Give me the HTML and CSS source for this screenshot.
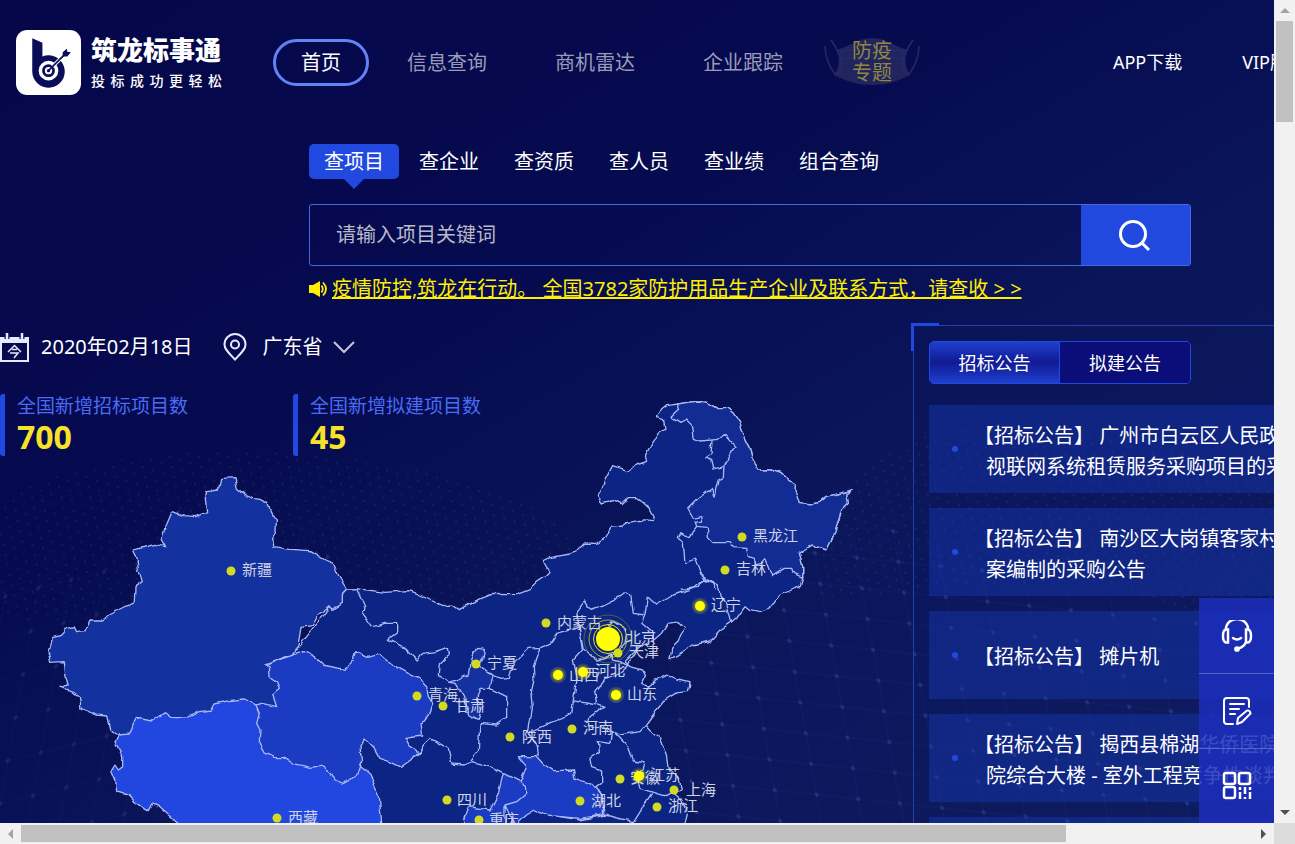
FILE: index.html
```html
<!DOCTYPE html>
<html lang="zh-CN">
<head>
<meta charset="utf-8">
<title>筑龙标事通</title>
<link rel="stylesheet" href="styles.css">
</head>
<body>
<div class="frame">
<div class="viewport">
<div class="page">
  <svg class="mesh" aria-hidden="true">
    <defs>
      <pattern id="net" width="34" height="40" patternUnits="userSpaceOnUse" patternTransform="rotate(-14) skewX(-24)">
        <path d="M0 20H34M17 0V40" stroke="#8aa0ff" stroke-opacity=".15" fill="none"/>
        <circle cx="17" cy="20" r="2" fill="#8aa0ff" fill-opacity=".6"/>
      </pattern>
      <pattern id="net2" width="42" height="30" patternUnits="userSpaceOnUse" patternTransform="rotate(6) skewX(16)">
        <path d="M0 15H42M21 0V30" stroke="#8aa0ff" stroke-opacity=".15" fill="none"/>
        <circle cx="21" cy="15" r="2" fill="#8aa0ff" fill-opacity=".6"/>
      </pattern>
      <pattern id="dust" width="11" height="9" patternUnits="userSpaceOnUse" patternTransform="rotate(18) skewX(30)">
        <circle cx="5" cy="4" r="1" fill="#8aa0ff" fill-opacity=".5"/>
      </pattern>
    </defs>
    <path d="M0 590C80 560 150 520 240 470L340 560 400 823H0Z" fill="url(#net)" opacity=".22"/>
    <path d="M0 500C120 440 260 440 420 470S560 560 620 560L600 620H0Z" fill="url(#dust)" opacity=".25"/>
    <path d="M640 823V600C760 560 860 500 920 540S1150 600 1274 640V823Z" fill="url(#net2)" opacity=".3"/>
    <path d="M820 520C900 410 1000 390 1274 480V640C1100 560 950 590 820 600Z" fill="url(#dust)" opacity=".25"/>
  </svg>

  <header class="header">
    <a class="logo" href="#">
      <svg class="logo-mark" viewBox="0 0 64 64" aria-hidden="true">
        <rect width="64" height="64" rx="11" fill="#fff"/>
        <path d="M16 8L26 12.500V26A16 16 0 1 1 16 41Z" fill="#0a0d57"/>
        <circle cx="32" cy="40" r="8" fill="none" stroke="#fff" stroke-width="3.400"/>
        <circle cx="32" cy="40" r="2.600" fill="none" stroke="#fff" stroke-width="2"/>
        <path d="M36 36L44 28" stroke="#fff" stroke-width="3.600"/>
        <path d="M32 40L50 22" stroke="#0a0d57" stroke-width="1.600"/>
        <path d="M46 22L50 18.500 50.500 21.500 54 22 50.500 26H46Z" fill="#0a0d57"/>
      </svg>
      <span class="logo-text"><b>筑龙标事通</b><small>投标成功更轻松</small></span>
    </a>
    <nav class="nav">
      <a class="nav-link current" href="#">首页</a>
      <a class="nav-link" href="#">信息查询</a>
      <a class="nav-link" href="#">商机雷达</a>
      <a class="nav-link" href="#">企业跟踪</a>
      <a class="mask" href="#">
        <svg class="mask-shape" viewBox="0 0 96 50" aria-hidden="true">
          <path d="M12 13C26 10 32 1 48 1S70 10 84 13C80 22 81 30 86 38C72 45 62 48 48 48S24 45 10 38C16 30 16 20 12 13Z" fill="#20245f"/>
          <path d="M16 14C30 13 66 13 80 14M17 22C30 19 66 19 79 22" fill="none" stroke="#2a2e68"/>
          <path d="M7 3C12 10 18 20 17 28S14 37 11 37C5 29 1 18 1 9M89 3C84 10 78 20 79 28S82 37 85 37C91 29 95 18 95 9" fill="none" stroke="#262a64" stroke-width="1.500"/>
        </svg>
        <span class="mask-text">防疫<br>专题</span>
      </a>
    </nav>
    <nav class="tools-nav">
      <a href="#">APP下载</a>
      <a href="#">VIP服务</a>
    </nav>
  </header>

  <section class="search">
    <div class="tabs">
      <button class="tab on" type="button">查项目</button>
      <button class="tab" type="button">查企业</button>
      <button class="tab" type="button">查资质</button>
      <button class="tab" type="button">查人员</button>
      <button class="tab" type="button">查业绩</button>
      <button class="tab" type="button">组合查询</button>
    </div>
    <form class="box">
      <input class="box-input" type="text" placeholder="请输入项目关键词" aria-label="请输入项目关键词">
      <button class="box-go" type="button" aria-label="搜索">
        <svg width="34" height="34" viewBox="0 0 34 34" fill="none" stroke="#fff" stroke-width="3" aria-hidden="true"><circle cx="14" cy="16" r="12.500"/><path d="M23 25L30 32"/></svg>
      </button>
    </form>
    <a class="notice" href="#"><svg width="19" height="18" viewBox="0 0 19 18" aria-hidden="true"><path d="M0 5H4L11 1V17L4 13H0Z" fill="#ffef00"/><path d="M12.500 5.500Q15 9 12.500 12.500M14 2.500Q20 9 14 15.500" fill="none" stroke="#ffef00" stroke-width="1.800"/></svg><span>疫情防控,筑龙在行动。 全国3782家防护用品生产企业及联系方式，请查收 &gt; &gt;</span></a>
  </section>

  <main class="board">
    <section class="overview">
      <svg class="map" viewBox="0 390 920 433" aria-label="全国项目分布">
        <defs>
          <filter id="rough" x="0" y="0" width="1" height="1" color-interpolation-filters="sRGB">
            <feTurbulence type="fractalNoise" baseFrequency=".12" numOctaves="1" seed="4"/>
            <feDisplacementMap in="SourceGraphic" scale="6" xChannelSelector="R" yChannelSelector="G"/>
          </filter>
          <radialGradient id="glow"><stop offset=".4" stop-color="#ffff00" stop-opacity=".5"/><stop offset="1" stop-color="#ffff00" stop-opacity="0"/></radialGradient>
        </defs>
        <g filter="url(#rough)">
        <g class="land" transform="translate(0 390) scale(.33333)">
          <path class="deep" d="M1040 597L1070 596 1155 607 1225 602 1252 612 1290 630 1330 647 1358 645 1378 659 1410 640 1445 625 1475 613 1550 614 1590 598 1610 578 1640 558 1651 547 1630 513 1650 503 1710 492 1730 485 1754 459 1792 460 1818 444 1835 412 1865 408 1880 398 1915 391 1960 395 1963 382 1950 357 1930 338 1910 323 1882 323 1863 341 1840 329 1807 339 1792 320 1802 305 1815 270 1838 227 1880 242 1910 225 1940 214 1936 197 1955 160 1975 130 1995 115 1990 85 1968 80 1980 62 2000 47 2030 42 2065 37 2095 33 2120 36 2150 53 2180 53 2200 70 2220 100 2235 145 2255 185 2262 220 2273 240 2315 240 2345 250 2370 272 2386 282 2385 305 2398 338 2435 342 2460 337 2480 320 2510 312 2560 300 2540 312 2545 340 2525 360 2513 400 2500 440 2480 480 2435 464 2398 487 2408 530 2408 562 2400 590 2375 600 2340 615 2325 640 2300 660 2280 668 2250 662 2235 650 2215 678 2190 700 2160 720 2130 753 2080 765 2040 790 2010 808 2015 775 2035 755 2042 735 2055 715 2035 695 2005 700 1985 730 1955 755 1930 765 1900 790 1875 815 1890 830 1925 840 1935 860 1925 880 1945 890 1970 870 2000 855 2030 870 2070 878 2065 905 2030 908 1995 930 1970 960 1938 1005 1960 1030 1980 1045 2000 1100 2005 1135 2035 1160 2045 1200 2020 1208 2045 1230 2060 1265 2045 1330 1000 1330 880 790 1000 640Z"/>
          <g transform="translate(0 210)">
            <path class="bright" d="M355 825L345 845 368 890 368 920 355 930 345 915 335 930 347 960 350 995 385 1005 405 1025 445 1052 455 1032 480 1040 535 1088 570 1120 1145 1120 1145 1090 1138 1010 1125 980 1110 940 1085 920 1000 700 700 700 390 780Z"/>
            <path class="vivid" d="M770 740L778 760 770 790 780 810 778 850 795 880 820 892 850 893 880 910 930 922 970 918 990 932 1005 960 1030 970 1050 960 1075 940 1085 910 1080 860 1095 837 1120 860 1140 895 1170 905 1205 922 1235 900 1255 875 1230 860 1215 832 1265 825 1260 795 1285 765 1298 730 1285 710 1280 680 1255 655 1225 640 1180 615 1140 583 1100 592 1065 575 1060 600 1035 628 968 615 940 590 912 575 795 612Z"/>
            <path class="mid" d="M1040 387L1018 352 1000 310 975 300 930 272 870 268 822 260 818 235 828 215 829 180 812 155 803 130 780 118 760 115 735 105 712 85 705 53 665 55 660 78 652 90 620 95 616 115 620 155 590 170 550 167 517 154 495 205 486 240 497 260 465 253 400 270 410 290 415 325 427 365 405 380 403 425 360 447 325 465 305 480 270 480 255 512 230 515 222 500 195 508 180 525 160 530 155 560 143 570 152 607 190 605 195 650 205 675 180 682 215 692 238 710 243 745 290 765 320 768 330 810 355 825 390 822 400 790 412 772 460 780 495 757 515 772 560 774 600 755 635 750 645 732 690 722 730 717 770 735 790 730 830 740 818 705 838 688 830 665 810 650 808 622 795 612 880 582 895 550 903 502 937 497 950 470 990 440 995 448 1027 430 1027 400Z"/>
          </g>
          <g transform="translate(1710)">
            <path class="north" d="M320 42L326 60 303 82 330 100 350 90 363 103 370 145 390 153 445 148 465 133 495 167 480 195 462 225 460 260 445 265 432 320 425 296 385 325 353 357 370 385 395 380 398 393 375 397 380 412 412 415 415 440 432 458 480 458 490 470 530 472 535 500 550 505 555 525 575 520 585 508 605 557 640 535 665 535 670 550 698 562 698 530 688 487 725 464 770 480 790 440 803 400 815 360 835 340 830 312 850 300 800 312 770 320 750 337 725 342 688 338 675 305 676 282 660 272 635 250 605 240 563 240 552 220 545 185 525 145 510 100 490 70 470 53 440 53 410 36 385 33 355 37Z"/>
            <path class="line" d="M423 152L420 190 405 200 425 208 432 237 460 230M380 412L360 440 330 428 322 442 340 460 345 520 378 507 395 550 400 565 430 580 440 600M335 598L385 592 400 565"/>
          </g>
          <g transform="translate(990 510)">
            <path class="mid" d="M425 290L440 265 463 268 458 300 440 315 470 335 490 345 480 385 450 385 440 420 460 435 445 478 420 465 400 410 375 370 358 367 415 345 420 310Z"/>
            <path class="vivid" d="M565 590L620 590 640 612 670 632 730 630 735 655 790 675 820 710 820 765 750 775 690 770 655 765 615 750 590 765 555 800 525 735 560 725 590 700 590 680 570 665 590 620ZM520 640L570 665 590 680 590 700 560 725 525 735 525 820 410 820 400 780 415 740 480 750 505 700Z"/>
            <path class="line" d="M80 86L105 145 98 160 128 200 165 190 200 190 200 215 172 238 225 265 262 300 275 280 315 275 352 262 355 285 328 312 325 345 358 367M470 335L510 355 535 352 545 320 570 290 595 265 630 262 660 250 680 220 740 205M630 262L610 320 612 360 603 400 607 445 595 515 622 560 625 590M750 230L758 270 730 300 742 355 730 420 725 460 680 480 600 515M480 385L530 410 530 475 500 495 450 490 445 570 420 600M260 585L300 535 355 565 365 612 400 615 425 605 480 620 520 640M730 422L800 435"/>
          </g>
          <g transform="translate(1680 540)">
            <path class="line" d="M60 185L50 125 75 92 90 118 130 105 165 88 190 68 212 75 220 130 255 135 262 80 290 105 340 75 400 55 430 30 420 5M255 135L245 160 280 190 280 215M430 30L475 45 480 75 500 100 515 155M60 185L70 240 110 270 160 255 160 270 200 285 215 265M130 180L160 155 200 180 195 220 160 255M205 285L170 315 135 330 105 370 110 400 132 408 90 440 85 470 140 475 180 495 240 485 258 465M165 490L205 530 220 570 255 575 250 600 225 610 240 655 320 680 340 668M155 480L150 520 115 515 118 545 90 565 95 590 125 600 125 640 110 650 130 680 135 735 220 755 245 715 275 670M135 735L60 750 0 740"/>
          </g>
        </g>
        </g>
        <g class="dots">
          <circle cx="231" cy="571" r="4.500"/><circle cx="277" cy="818" r="4.500"/><circle cx="417" cy="696" r="4.500"/><circle cx="443" cy="706" r="4.500"/><circle cx="476" cy="664" r="4.500"/><circle cx="510" cy="737" r="4.500"/><circle cx="447" cy="800" r="4.500"/><circle cx="479" cy="820" r="4.500"/><circle cx="546" cy="623" r="4.500"/><circle cx="572" cy="729" r="4.500"/><circle cx="580" cy="801" r="4.500"/><circle cx="620" cy="779" r="4.500"/><circle cx="674" cy="790" r="4.500"/><circle cx="657" cy="807" r="4.500"/><circle cx="618" cy="653" r="4.500"/><circle cx="725" cy="570" r="4.500"/><circle cx="742" cy="537" r="4.500"/>
        </g>
        <g class="names">
          <text x="242" y="575">新疆</text><text x="288" y="823">西藏</text><text x="428" y="700">青海</text><text x="455" y="711">甘肃</text><text x="487" y="668">宁夏</text><text x="522" y="742">陕西</text><text x="457" y="805">四川</text><text x="489" y="825">重庆</text><text x="557" y="628">内蒙古</text><text x="569" y="680">山西</text><text x="595" y="676">河北</text><text x="583" y="733">河南</text><text x="591" y="806">湖北</text><text x="630" y="783">安徽</text><text x="650" y="780">江苏</text><text x="686" y="795">上海</text><text x="668" y="811">浙江</text><text x="627" y="699">山东</text><text x="629" y="657">天津</text><text x="626" y="643">北京</text><text x="711" y="610">辽宁</text><text x="736" y="574">吉林</text><text x="753" y="541">黑龙江</text>
        </g>
        <g fill="url(#glow)"><circle cx="558" cy="675" r="9"/><circle cx="583" cy="672" r="9"/><circle cx="639" cy="776" r="9"/><circle cx="616" cy="695" r="9"/><circle cx="700" cy="606" r="9"/></g>
        <g fill="#ffff00"><circle cx="558" cy="675" r="5"/><circle cx="583" cy="672" r="5"/><circle cx="639" cy="776" r="5"/><circle cx="616" cy="695" r="5"/><circle cx="700" cy="606" r="5"/><circle cx="608" cy="639" r="12"/></g>
        <g fill="none" stroke="#e6e600"><circle cx="608" cy="639" r="14.500"/><circle cx="608" cy="639" r="19" stroke-opacity=".7"/><circle cx="608" cy="639" r="24" stroke-opacity=".3"/></g>
      </svg>
      <div class="when">
        <svg class="cal" viewBox="0 0 29 29" aria-hidden="true"><path d="M1 5H28V28H1Z" fill="none" stroke="#e6eaff" stroke-width="2"/><path d="M0 4H29V10H0Z" fill="#e6eaff"/><path d="M7 0V6M22 0V6" stroke="#080b50" stroke-width="5"/><path d="M7 0V6M22 0V6" stroke="#e6eaff" stroke-width="2.500"/><path d="M8 19L14.500 12.500 21 19M12 16.500H17M10 20H18L14 25" fill="none" stroke="#e6eaff" stroke-width="1.500"/></svg>
        <time>2020年02月18日</time>
        <svg class="pin" viewBox="0 0 24 28" fill="none" stroke="#e6eaff" stroke-width="2" aria-hidden="true"><path d="M12 26.500C6 20 1.500 16.500 1.500 11.500A10.500 10.500 0 0 1 22.500 11.500C22.500 16.500 18 20 12 26.500Z"/><circle cx="12" cy="11.500" r="4"/></svg>
        <button class="province" type="button">广东省<svg width="22" height="13" viewBox="0 0 22 13" fill="none" stroke="#c6c8d8" stroke-width="2" aria-hidden="true"><path d="M1 1L11 11 21 1"/></svg></button>
      </div>
      <div class="stats">
        <div class="stat"><span>全国新增招标项目数</span><strong>700</strong></div>
        <div class="stat"><span>全国新增拟建项目数</span><strong>45</strong></div>
      </div>
    </section>
    <section class="panel">
      <div class="switch">
        <button class="on" type="button">招标公告</button><button type="button">拟建公告</button>
      </div>
      <ul class="news">
        <li><a href="#">【招标公告】 广州市白云区人民政<br>视联网系统租赁服务采购项目的采</a></li>
        <li><a href="#">【招标公告】 南沙区大岗镇客家村<br>案编制的采购公告</a></li>
        <li><a href="#">【招标公告】 摊片机</a></li>
        <li><a href="#">【招标公告】 揭西县棉湖华侨医院<br>院综合大楼 - 室外工程竞争性谈判</a></li>
        <li></li>
      </ul>
    </section>
  </main>
</div>
<aside class="side">
  <button type="button" aria-label="在线客服"><svg width="32" height="32" viewBox="0 0 32 32" fill="none" stroke="#fff" stroke-width="2.500" stroke-linecap="round" aria-hidden="true"><path d="M5 9A11 10 0 0 1 27 9M12 18Q16 21 20 18"/><path d="M7 9.500H5Q2 10 2 16T5 22.500H7ZM25 9.500H27Q30 10 30 16T27 22.500H25ZM25 22Q23 27 17 28.500"/><circle cx="16" cy="29" r="1.600" fill="#fff"/></svg></button>
  <button type="button" aria-label="意见反馈"><svg width="30" height="30" viewBox="0 0 30 30" fill="none" stroke="#fff" stroke-width="2" stroke-linecap="round" stroke-linejoin="round" aria-hidden="true"><path d="M11 28H5Q2 28 2 25V5Q2 2 5 2H24Q27 2 27 5V11M8 8H22M8 13H17M8 18H13M15 28L16 22 25 14.500Q28 14 28.500 17.500L20 26Z"/></svg></button>
  <button type="button" aria-label="二维码"><svg width="30" height="30" viewBox="0 0 30 30" fill="none" stroke="#fff" stroke-width="2.500" aria-hidden="true"><rect x="2" y="2" width="11" height="11" rx="2"/><rect x="17" y="2" width="11" height="11" rx="2"/><rect x="2" y="16" width="11" height="11" rx="2"/><path d="M18 16V19M18 21V28M23 16V23M23 26V28M28 16V19M28 21V28"/></svg></button>
</aside>
</div>
<div class="bar bar-y" aria-hidden="true"><i class="arrow up"></i><i class="thumb"></i><i class="arrow down"></i></div>
<div class="bar bar-x" aria-hidden="true"><i class="arrow left"></i><i class="thumb"></i><i class="arrow right"></i></div>
<div class="corner"></div>
</div>
</body>
</html>
```
FILE: styles.css
```css
* { box-sizing: border-box; }
body { margin: 0; font: 20px/30px "Noto Sans", "Noto Sans CJK SC", sans-serif; color: #fff; }
a { color: inherit; text-decoration: none; }
button, input { font: inherit; color: inherit; background: none; border: 0; padding: 0; margin: 0; }
button { cursor: pointer; }
svg { flex: none; }

.frame { display: grid; grid-template: minmax(0, 1fr) 21px / minmax(0, 1fr) 21px; height: 100vh; }
.viewport { position: relative; overflow: hidden; background: linear-gradient(150deg, #05074a 0%, #060a4e 35%, #0a155a 60%, #0e1c60 100%); }
.page { position: relative; min-width: 1500px; }
.mesh { position: absolute; inset: 0; width: 100%; height: 823px; }

.header { position: relative; display: flex; align-items: center; height: 124px; padding: 0 194px 0 16px; }
.logo { display: flex; align-items: center; gap: 10px; width: 257px; }
.logo-mark { width: 65px; height: 65px; }
.logo-text { display: flex; flex-direction: column; width: 131px; }
.logo-text b { font-size: 26px; line-height: 38px; font-weight: 900; white-space: nowrap; }
.logo-text small { font-size: 14px; line-height: 24px; font-weight: 500; text-align-last: justify; }
.nav { display: flex; align-items: center; gap: 8px; }
.nav-link { padding: 0 30px; line-height: 41px; color: #9a9bb8; white-space: nowrap; }
.nav-link.current { padding: 0 25px; border: 3px solid #6283f5; border-radius: 24px; color: #fff; }
.mask { position: relative; display: grid; place-items: center; width: 96px; height: 50px; margin-left: 3px; }
.mask-shape { grid-area: 1 / 1; width: 96px; height: 50px; }
.mask-text { grid-area: 1 / 1; line-height: 22px; color: #91873f; }
.tools-nav { display: flex; gap: 60px; margin-left: auto; font-size: 18px; white-space: nowrap; }

.search { position: relative; width: 882px; margin: 20px auto 0; }
.tabs { display: flex; gap: 5px; }
.tab { position: relative; padding: 0 15px; line-height: 35px; border-radius: 5px; }
.tab.on { background: #2149e0; }
.tab.on::after { content: ""; position: absolute; top: 100%; left: 50%; margin-left: -10px; border: 10px solid transparent; border-top-color: #2149e0; border-bottom: 0; }
.box { display: flex; height: 62px; margin-top: 25px; border: 1px solid #4468e0; border-radius: 3px; }
.box-input { flex: 1; padding: 0 26px; }
.box-input::placeholder { color: #b9bac9; opacity: 1; }
.box-go { display: grid; place-items: center; width: 109px; background: #2149e0; }
.notice { display: flex; align-items: center; gap: 4px; margin-top: 8px; color: #ffef00; white-space: nowrap; }
.notice span { text-decoration: underline; }

.board { position: relative; display: grid; grid-template-columns: 913px minmax(0, 1fr); margin-top: 21px; }
.overview { position: relative; }
.map { position: absolute; top: 65px; left: 0; width: 920px; height: 433px; }
.land path { stroke: #a9b9f5; stroke-width: 4; stroke-linejoin: round; }
.land .deep { fill: #0c2483; }
.land .mid { fill: #1431a0; }
.land .north { fill: #132c93; }
.land .vivid { fill: #1b3cc2; }
.land .bright { fill: #2147e0; }
.land .line { fill: none; }
.dots { fill: #d2da22; }
.names { font-size: 15px; fill: #cdd3e6; }
.when { position: relative; display: flex; align-items: center; height: 44px; }
.cal { width: 29px; height: 29px; margin-right: 12px; }
.pin { width: 24px; height: 28px; margin: 0 16px 0 30px; }
.province { display: flex; align-items: center; gap: 10px; }
.stats { position: relative; display: flex; margin-top: 25px; }
.stat { display: flex; flex-direction: column; width: 293px; padding-left: 12px; border-left: 5px solid #2149e0; border-radius: 3px; }
.stat span { font-size: 19px; line-height: 24px; color: #4a6cf5; }
.stat strong { font: bold 32px/38px "Noto Sans", sans-serif; color: #f7e22a; }

.panel { position: relative; padding: 15px 15px 0; border: solid #2040b0; border-width: 1px 0 0 1px; }
.panel::before { content: ""; position: absolute; top: -3px; left: -3px; width: 25px; height: 25px; border: solid #2149e0; border-width: 3px 0 0 3px; }
.switch { display: inline-flex; border: 1px solid #2149e0; border-radius: 5px; overflow: hidden; vertical-align: top; }
.switch button { width: 130px; padding-top: 2px; line-height: 39px; font-size: 18px; background: #0b0d78; }
.switch .on { background: linear-gradient(#1e3fce, #111a92 50%, #1e3fce); border-right: 1px solid #2149e0; }
.news { display: grid; grid-auto-rows: 88px; gap: 15px; margin: 21px 0 0; padding: 0; list-style: none; height: 418px; overflow: hidden; }
.news li { display: flex; align-items: center; padding-left: 23px; background: rgba(25, 60, 190, .4); }
.news li::before { content: ""; width: 6px; height: 6px; border-radius: 50%; background: #2149e0; }
.news a { padding: 3px 0 0 28px; text-indent: -12px; line-height: 31px; white-space: nowrap; }

.side { position: absolute; right: 0; bottom: 0; display: grid; grid-auto-rows: 75px; width: 75px; background: rgba(28, 45, 185, .86); }
.side button { display: grid; place-items: center; }
.side button + button { border-top: 1px solid #5663c8; }

.bar { display: flex; align-items: center; background: #f1f1f1; }
.bar-y { flex-direction: column; }
.thumb { background: #c1c1c1; }
.bar-y .thumb { width: 17px; height: 101px; margin-bottom: auto; }
.bar-x .thumb { width: 82%; height: 17px; margin-right: auto; }
.arrow { display: grid; place-items: center; flex: none; width: 21px; height: 21px; }
.arrow::before { content: ""; border: 5px solid transparent; }
.up::before { border-bottom-color: #a3a3a3; border-top: 0; }
.down::before { border-top-color: #505050; border-bottom: 0; }
.left::before { border-right-color: #a3a3a3; border-left: 0; }
.right::before { border-left-color: #505050; border-right: 0; }
.corner { background: #dcdcdc; }
```
